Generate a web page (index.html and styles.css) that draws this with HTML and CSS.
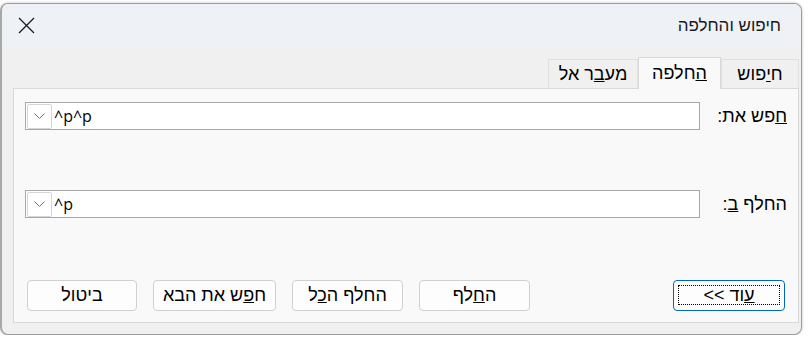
FILE: index.html
```html
<!DOCTYPE html>
<html lang="he" dir="rtl">
<head>
    <meta charset="UTF-8">
    <title>חיפוש והחלפה</title>
    <link rel="stylesheet" href="styles.css">
</head>
<body>

    <div class="dialog">
        <div class="titlebar">
            <span class="title">חיפוש והחלפה</span>
            <span class="close">
                <svg width="17" height="17" viewBox="0 0 17 17">
                    <path d="M1 1 L16 16 M16 1 L1 16" stroke="#1b1b1b" stroke-width="1.3" fill="none"/>
                </svg>
            </span>
        </div>

        <div class="content">
            <div class="tabs">
                <div class="tab">ח<u>י</u>פוש</div>
                <div class="tab active"><u>ה</u>חלפה</div>
                <div class="tab">מע<u>ב</u>ר אל</div>
            </div>

            <div class="panel">
                <div class="field-row">
                    <label class="field-label"><u>ח</u>פש את:</label>
                    <div class="combo">
                        <span class="drop">
                            <svg width="11" height="6" viewBox="0 0 11 6">
                                <path d="M0.5 0.5 L5.5 5.5 L10.5 0.5" stroke="#6e6e6e" stroke-width="1" fill="none"/>
                            </svg>
                        </span>
                        <span class="value">^p^p</span>
                    </div>
                </div>

                <div class="field-row second">
                    <label class="field-label">החלף <u>ב</u>:</label>
                    <div class="combo">
                        <span class="drop">
                            <svg width="11" height="6" viewBox="0 0 11 6">
                                <path d="M0.5 0.5 L5.5 5.5 L10.5 0.5" stroke="#6e6e6e" stroke-width="1" fill="none"/>
                            </svg>
                        </span>
                        <span class="value">^p</span>
                    </div>
                </div>

                <div class="buttons">
                    <button class="btn focused"><u>ע</u>וד &gt;&gt;</button>
                    <div class="btn-group">
                        <button class="btn">ה<u>ח</u>לף</button>
                        <button class="btn">החלף ה<u>כ</u>ל</button>
                        <button class="btn wide">ח<u>פ</u>ש את הבא</button>
                        <button class="btn">ביטול</button>
                    </div>
                </div>
            </div>
        </div>
    </div>

</body>
</html>
```

FILE: styles.css
```css
/* Windows 11 find & replace dialog */
body {
    margin: 0;
    background: #ffffff;
    font-family: 'Segoe UI', 'Liberation Sans', 'DejaVu Sans', sans-serif;
    font-size: 18px;
    color: #1a1a1a;
}

.dialog {
    margin: 3px auto 0 0;
    width: 802px;
    height: 332px;
    box-sizing: border-box;
    border: 1px solid #9c9c9c;
    border-left: 2px solid #a8a8a8;
    border-radius: 8px;
    overflow: hidden;
    background: #f0f0f0;
    display: flex;
    flex-direction: column;
    box-shadow: 0 0 3px rgba(0,0,0,0.25);
}

.titlebar {
    height: 43px;
    flex-shrink: 0;
    background: #eef2f7;
    display: flex;
    align-items: center;
    justify-content: space-between;
    padding: 0 20px 0 16px;
}

.title { font-size: 17px; color: #1a1a1a; }

.close { display: flex; }

.content {
    flex: 1;
    display: flex;
    flex-direction: column;
    padding: 10px 2px 11px 11px;
}

.tabs {
    display: flex;
    align-items: flex-end;
    height: 31px;
}

.tab {
    height: 29px;
    box-sizing: border-box;
    border: 1px solid #e0e0e0;
    border-bottom: none;
    background: #f0f0f0;
    display: flex;
    align-items: center;
    justify-content: center;
    width: 78px;
    color: #000;
}

.tab:nth-child(3) { width: 90px; }

.tab.active {
    width: 83px;
    height: 32px;
    margin-bottom: -1px;
    background: #f9f9f9;
    border-color: #d9d9d9;
    position: relative;
    z-index: 1;
}

.panel {
    flex: 1;
    background: #f9f9f9;
    border: 1px solid #d9d9d9;
    padding: 13px 11px 11px 11px;
    display: flex;
    flex-direction: column;
}

.field-row {
    display: flex;
    align-items: center;
    height: 28px;
}

.field-row.second { margin-top: 60px; }

.field-label {
    flex: 1;
    color: #000;
}

.combo {
    width: 675px;
    height: 28px;
    box-sizing: border-box;
    border: 1px solid #a8a8a8;
    background: #fff;
    direction: ltr;
    display: flex;
    align-items: center;
    padding: 1px;
}

.drop {
    width: 25px;
    height: 25px;
    box-sizing: border-box;
    border: 1px solid #d6d6d6;
    border-radius: 2px;
    display: flex;
    align-items: center;
    justify-content: center;
}

.value {
    margin-left: 2px;
    font-family: 'Open Sans', 'Liberation Sans', sans-serif;
    font-size: 16px;
    color: #000;
}

.buttons {
    margin: auto 2px 0 2px;
    display: flex;
    justify-content: space-between;
}

.btn-group {
    display: flex;
    gap: 16px;
}

.btn {
    width: 111px;
    height: 31px;
    box-sizing: border-box;
    border: 1px solid #d0d0d0;
    border-radius: 4px;
    background: #fdfdfd;
    font-family: inherit;
    font-size: 18px;
    color: #000;
    padding: 0;
}

.btn.wide { width: 123px; }

.btn:last-child { width: 110px; }

.btn.focused {
    width: 112px;
    border-color: #0067c0;
    position: relative;
}

.btn.focused::after {
    content: "";
    position: absolute;
    top: 4px;
    bottom: 5px;
    left: 4px;
    right: 4px;
    border: 1px dotted #000;
}
```
